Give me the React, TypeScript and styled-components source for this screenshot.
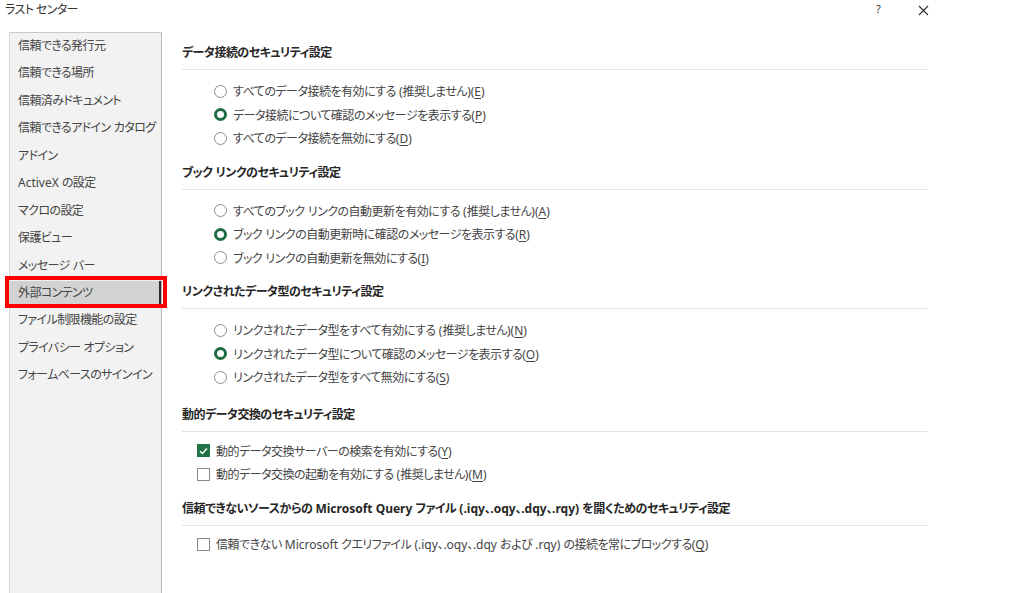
import React from "react";
import styled, { createGlobalStyle } from "styled-components";

const GlobalStyle = createGlobalStyle`
  html, body {
    margin: 0;
    padding: 0;
    background: #ffffff;
  }
  body {
    font-family: "Noto Sans", "Noto Sans CJK JP", sans-serif;
    font-feature-settings: "palt";
    color: #404040;
  }
`;

type Option = { label: string; key: string; checked?: boolean };

const navItems = [
  "信頼できる発行元",
  "信頼できる場所",
  "信頼済みドキュメント",
  "信頼できるアドイン カタログ",
  "アドイン",
  "ActiveX の設定",
  "マクロの設定",
  "保護ビュー",
  "メッセージ バー",
  "外部コンテンツ",
  "ファイル制限機能の設定",
  "プライバシー オプション",
  "フォームベースのサインイン",
];

const sections: { title: string; kind: "radio" | "check"; options: Option[] }[] = [
  {
    title: "データ接続のセキュリティ設定",
    kind: "radio",
    options: [
      { label: "すべてのデータ接続を有効にする (推奨しません)", key: "E" },
      { label: "データ接続について確認のメッセージを表示する", key: "P", checked: true },
      { label: "すべてのデータ接続を無効にする", key: "D" },
    ],
  },
  {
    title: "ブック リンクのセキュリティ設定",
    kind: "radio",
    options: [
      { label: "すべてのブック リンクの自動更新を有効にする (推奨しません)", key: "A" },
      { label: "ブック リンクの自動更新時に確認のメッセージを表示する", key: "R", checked: true },
      { label: "ブック リンクの自動更新を無効にする", key: "I" },
    ],
  },
  {
    title: "リンクされたデータ型のセキュリティ設定",
    kind: "radio",
    options: [
      { label: "リンクされたデータ型をすべて有効にする (推奨しません)", key: "N" },
      { label: "リンクされたデータ型について確認のメッセージを表示する", key: "O", checked: true },
      { label: "リンクされたデータ型をすべて無効にする", key: "S" },
    ],
  },
  {
    title: "動的データ交換のセキュリティ設定",
    kind: "check",
    options: [
      { label: "動的データ交換サーバーの検索を有効にする", key: "Y", checked: true },
      { label: "動的データ交換の起動を有効にする (推奨しません)", key: "M" },
    ],
  },
  {
    title:
      "信頼できないソースからの Microsoft Query ファイル (.iqy、.oqy、.dqy、.rqy) を開くためのセキュリティ設定",
    kind: "check",
    options: [
      {
        label:
          "信頼できない Microsoft クエリファイル (.iqy、.oqy、.dqy および .rqy) の接続を常にブロックする",
        key: "Q",
      },
    ],
  },
];

// latin runs keep normal spacing, only the japanese text is tightened
const Mixed = ({ text }: { text: string }) => (
  <>
    {text.split(/([\x20-\x7e]+)/).map((part, i) =>
      /^[\x20-\x7e]+$/.test(part) ? <Latin key={i}>{part}</Latin> : part
    )}
  </>
);

export default function App() {
  return (
    <>
      <GlobalStyle />
      <Window>
        <TitleBar>
          <Title>ラスト センター</Title>
          <Help>?</Help>
          <Close>
            <svg width="11" height="11" viewBox="0 0 11 11">
              <path d="M1 1L10 10M10 1L1 10" stroke="#333" strokeWidth="1.2" />
            </svg>
          </Close>
        </TitleBar>
        <Body>
          <Sidebar>
            {navItems.map((item) => (
              <NavItem key={item} $active={item === "外部コンテンツ"}>
                <Mixed text={item} />
                {item === "外部コンテンツ" && <Highlight />}
              </NavItem>
            ))}
          </Sidebar>
          <Content>
            {sections.map((s, i) => (
              <Section key={s.title} $first={i === 0} $extra={i === 3}>
                <Heading>
                  <Mixed text={s.title} />
                </Heading>
                <Divider />
                <Options $indent={s.kind === "radio"}>
                  {s.options.map((o) => (
                    <OptionRow key={o.key}>
                      {s.kind === "radio" ? (
                        <Radio $checked={!!o.checked} />
                      ) : (
                        <Check $checked={!!o.checked}>
                          {o.checked && (
                            <svg width="9" height="8" viewBox="0 0 9 8">
                              <path
                                d="M1 4.2L3.4 6.4L8 1.4"
                                stroke="#fff"
                                strokeWidth="1.5"
                                fill="none"
                              />
                            </svg>
                          )}
                        </Check>
                      )}
                      <span>
                        <Mixed text={o.label} />
                        <Latin>
                          (<u>{o.key}</u>)
                        </Latin>
                      </span>
                    </OptionRow>
                  ))}
                </Options>
              </Section>
            ))}
          </Content>
        </Body>
      </Window>
    </>
  );
}

const Latin = styled.span`
  letter-spacing: 0;
`;

const Window = styled.div`
  width: 1024px;
  height: 593px;
  display: flex;
  flex-direction: column;
  overflow: hidden;
`;

const TitleBar = styled.div`
  height: 32px;
  display: flex;
  align-items: flex-start;
  overflow: hidden;
`;

const Title = styled.div`
  margin-left: 5px;
  margin-top: 2px;
  font-size: 12px;
  letter-spacing: -0.6px;
  line-height: 16px;
  color: #333;
  flex: 1;
`;

const Help = styled.div`
  width: 12px;
  margin-top: 1px;
  font-size: 11px;
  line-height: 16px;
  color: #333;
`;

const Close = styled.div`
  margin: 5px 95px 0 30px;
  line-height: 0;
`;

const Body = styled.div`
  flex: 1;
  display: flex;
  min-height: 0;
`;

const Sidebar = styled.div`
  margin-left: 9px;
  width: 151px;
  background: #f2f2f2;
  border-top: 1px solid #c9c9c9;
  border-left: 1px solid #d6d6d6;
  border-right: 1px solid #b9b9b9;
  padding-top: 1px;
  display: flex;
  flex-direction: column;
  gap: 3.45px;
`;

const NavItem = styled.div<{ $active: boolean }>`
  position: relative;
  height: 24px;
  line-height: 24px;
  padding-left: 8px;
  font-size: 12px;
  letter-spacing: -0.6px;
  color: #444;
  white-space: nowrap;
  background: ${(p) => (p.$active ? "#d2d2d2" : "transparent")};
  border-right: 2px solid ${(p) => (p.$active ? "#2b2b2b" : "transparent")};
`;

const Highlight = styled.div`
  position: absolute;
  left: -5px;
  top: -4.5px;
  width: 162px;
  height: 32px;
  box-sizing: border-box;
  border: 4.5px solid #ff0000;
  pointer-events: none;
`;

const Content = styled.div`
  width: 745px;
  padding-left: 20px;
  display: flex;
  flex-direction: column;
`;

const Section = styled.div<{ $first: boolean; $extra: boolean }>`
  margin-top: ${(p) => (p.$first ? "11px" : p.$extra ? "16px" : "12.5px")};
`;

const Heading = styled.div`
  height: 20px;
  line-height: 20px;
  font-size: 12px;
  letter-spacing: -0.5px;
  font-weight: 700;
  color: #262626;
  white-space: nowrap;
`;

const Divider = styled.div`
  margin-top: 6px;
  height: 1px;
  background: #e3e3e3;
`;

const Options = styled.div<{ $indent: boolean }>`
  margin-top: ${(p) => (p.$indent ? "9.5px" : "7px")};
  padding-left: ${(p) => (p.$indent ? "32px" : "15px")};
  display: flex;
  flex-direction: column;
`;

const OptionRow = styled.div`
  height: 23.5px;
  display: flex;
  align-items: center;
  gap: 6px;
  font-size: 12px;
  letter-spacing: -0.5px;
  color: #444;
  white-space: nowrap;

  u {
    text-underline-offset: 2px;
  }
`;

const Radio = styled.span<{ $checked: boolean }>`
  width: 13px;
  height: 13px;
  box-sizing: border-box;
  border-radius: 50%;
  background: #fff;
  border: ${(p) => (p.$checked ? "3.5px solid #1d6b3f" : "1px solid #8a8a8a")};
  flex-shrink: 0;
`;

const Check = styled.span<{ $checked: boolean }>`
  width: 13px;
  height: 13px;
  box-sizing: border-box;
  display: flex;
  align-items: center;
  justify-content: center;
  background: ${(p) => (p.$checked ? "#217346" : "#fff")};
  border: 1px solid ${(p) => (p.$checked ? "#217346" : "#8a8a8a")};
  flex-shrink: 0;
`;
